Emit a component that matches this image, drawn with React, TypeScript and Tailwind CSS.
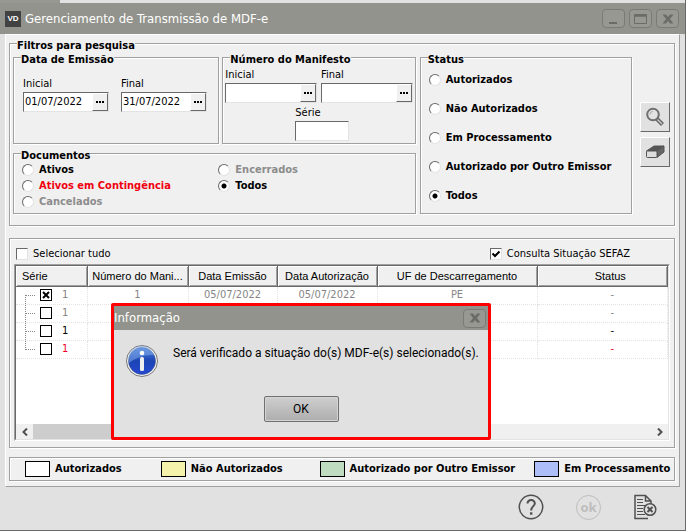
import type { ReactNode } from 'react';

const groove = 'border border-[#a0a0a0] shadow-[1px_1px_0_#fff,inset_1px_1px_0_#fff]';
const sunken = 'border border-t-[#696969] border-l-[#696969] border-r-[#e3e3e3] border-b-[#e3e3e3] bg-white';
const raised = 'border border-t-white border-l-white border-r-[#696969] border-b-[#696969]';

const statusOptions = ['Autorizados', 'Não Autorizados', 'Em Processamento', 'Autorizado por Outro Emissor', 'Todos'];

const documentOptions = [
  { label: 'Ativos', color: 'text-black' },
  { label: 'Encerrados', color: 'text-[#8c8c8c]' },
  { label: 'Ativos em Contingência', color: 'text-[#f0000f]' },
  { label: 'Todos', color: 'text-black' },
  { label: 'Cancelados', color: 'text-[#8c8c8c]' },
];

const rows = [
  { serie: '1', numero: '1', emissao: '05/07/2022', autorizacao: '05/07/2022', uf: 'PE', status: '-', color: 'text-[#868686]', checked: true },
  { serie: '1', numero: '', emissao: '', autorizacao: '', uf: '', status: '-', color: 'text-[#868686]', checked: false },
  { serie: '1', numero: '', emissao: '', autorizacao: '', uf: '', status: '-', color: 'text-black', checked: false },
  { serie: '1', numero: '', emissao: '', autorizacao: '', uf: '', status: '-', color: 'text-[#f0002a]', checked: false },
];

const columns = [
  { title: 'Série', width: 'w-[71px]' },
  { title: 'Número do Mani...', width: 'w-[101px]' },
  { title: 'Data Emissão', width: 'w-[89px]' },
  { title: 'Data Autorização', width: 'w-[100px]' },
  { title: 'UF de Descarregamento', width: 'w-[160px]' },
  { title: 'Status', width: 'w-auto' },
];

const Group = ({ title, className = '', children }: { title: string; className?: string; children: ReactNode }) => (
  <fieldset className={`relative min-w-0 ${groove} ${className}`}>
    <legend className="absolute -top-1.5 left-[7px] bg-[#f0f0f0] text-[11px] leading-4 font-bold whitespace-nowrap">{title}</legend>
    {children}
  </fieldset>
);

const Radio = ({ name, label, color = 'text-black', checked }: { name: string; label: string; color?: string; checked: boolean }) => (
  <label className={`flex items-center gap-[5px] text-[11px] leading-4 font-bold whitespace-nowrap ${color}`}>
    <input
      type="radio"
      name={name}
      defaultChecked={checked}
      className="size-3 shrink-0 appearance-none rounded-full border border-t-[#696969] border-l-[#696969] border-r-[#e3e3e3] border-b-[#e3e3e3] bg-white checked:bg-[radial-gradient(circle,#000_2px,#fff_3px)]"
    />
    {label}
  </label>
);

const CheckOption = ({ label, checked }: { label: string; checked: boolean }) => (
  <label className="flex items-center gap-[5px] text-[11px] leading-4 whitespace-nowrap">
    <span className="relative size-3">
      <input type="checkbox" defaultChecked={checked} className={`peer block size-3 appearance-none ${sunken}`} />
      <svg viewBox="0 0 12 12" className="pointer-events-none absolute inset-0 hidden size-3 peer-checked:block">
        <path d="M2.5 5.5 L5 8 L9.5 3.5" fill="none" stroke="#000" strokeWidth="2" />
      </svg>
    </span>
    {label}
  </label>
);

const PickerInput = ({ label, value = '' }: { label: string; value?: string }) => (
  <div className="min-w-0">
    <label className="block text-[11px] leading-4">
      {label}
      <span className={`flex h-5 ${sunken}`}>
        <input type="text" defaultValue={value} className="w-full min-w-0 pl-px outline-none" />
        <button type="button" aria-label={`Escolher ${label}`} className={`flex w-4 shrink-0 items-center justify-center bg-[#f0f0f0] ${raised}`}>
          <svg viewBox="0 0 8 2" className="h-0.5 w-2" fill="#000">
            <rect x="0" width="2" height="2" />
            <rect x="3" width="2" height="2" />
            <rect x="6" width="2" height="2" />
          </svg>
        </button>
      </span>
    </label>
  </div>
);

const CaptionButton = ({ label, children }: { label: string; children: ReactNode }) => (
  <button type="button" aria-label={label} className="flex h-[19px] w-[23px] items-center justify-center rounded border border-[#7a7b75] bg-[#979892]">
    <svg viewBox="0 0 14 12" className="h-3 w-3.5" fill="none" stroke="#6b6c67">
      {children}
    </svg>
  </button>
);

const closeMark = <path d="M1.500 1.500h3.500l2 2.500 2-2.500h3.500L8.900 6 12.500 10.500H9L7 8 5 10.500H1.500l3.600-4.500z" fill="#6b6c67" stroke="none" />;

const Filters = () => (
  <Group title="Filtros para pesquisa" className="flex gap-2 pt-[13px] pr-1 pb-[11px] pl-[3px]">
    <div className="grid min-w-0 flex-1 grid-cols-[404fr_213fr] gap-1">
      <div className="flex flex-col gap-[9px]">
        <div className="grid grid-cols-[207fr_194fr] gap-[3px]">
          <Group title="Data de Emissão" className="h-[87px] px-[9px] pt-[18px]">
            <div className="grid grid-cols-[86px_86px] gap-3">
              <PickerInput label="Inicial" value="01/07/2022" />
              <PickerInput label="Final" value="31/07/2022" />
            </div>
          </Group>
          <Group title="Número do Manifesto" className="h-[87px] px-[2px] pt-[9px]">
            <div className="grid grid-cols-2 gap-1">
              <PickerInput label="Inicial" />
              <PickerInput label="Final" />
            </div>
            <label className="mt-0.5 ml-[70px] block w-[54px] text-[11px] leading-4">
              Série
              <input type="text" className={`block h-5 w-full ${sunken}`} />
            </label>
          </Group>
        </div>
        <Group title="Documentos" className="grid h-[61px] grid-cols-2 content-start pt-2 pl-2">
          {documentOptions.map((option) => (
            <Radio key={option.label} name="documentos" label={option.label} color={option.color} checked={option.label === 'Todos'} />
          ))}
        </Group>
      </div>
      <Group title="Status" className="flex flex-col gap-[13px] pt-3.5 pl-2">
        {statusOptions.map((option) => (
          <Radio key={option} name="status" label={option} checked={option === 'Todos'} />
        ))}
      </Group>
    </div>
    <div className="flex flex-col gap-[5px] pt-[45px]">
      <button type="button" aria-label="Pesquisar" className={`flex size-[30px] items-center justify-center bg-[#e1e1e1] ${raised}`}>
        <svg viewBox="0 0 20 20" className="size-5" fill="none">
          <path d="M11.500 11.500 L17.500 17.500" stroke="#606060" strokeWidth="4" />
          <path d="M12.500 12.500 L17 17" stroke="#ccc" strokeWidth="1.500" />
          <circle cx="8" cy="7.500" r="5.800" fill="#e3e3e3" stroke="#707070" strokeWidth="2" />
          <path d="M5 7.500a3 3 0 0 1 3-3" stroke="#aaa" />
        </svg>
      </button>
      <button type="button" aria-label="Limpar" className={`flex size-[30px] items-center justify-center bg-[#e1e1e1] ${raised}`}>
        <svg viewBox="0 0 20 20" className="size-5" stroke="#555" strokeLinejoin="round">
          <path d="M1.500 9 L9 4 H19 L12 9z" fill="#555" />
          <path d="M12 9 L19 4 V10 L12 15.500z" fill="#666" />
          <rect x="1.500" y="9" width="10.500" height="6.500" rx="1" fill="#ddd" />
        </svg>
      </button>
    </div>
  </Group>
);

const Results = () => (
  <section className={`px-1 pt-[7px] pb-1.5 ${groove}`}>
    <div className="flex justify-between pr-10 pl-0.5">
      <CheckOption label="Selecionar tudo" checked={false} />
      <CheckOption label="Consulta Situação SEFAZ" checked />
    </div>
    <div className="mt-0.5 border border-t-[#a0a0a0] border-l-[#a0a0a0] border-r-white border-b-white">
      <div className={sunken}>
        <div className="min-h-[158px]">
          <table className="w-full table-fixed border-collapse text-center text-[11px] leading-4">
            <thead>
              <tr className="h-5">
                {columns.map((column) => (
                  <th
                    key={column.title}
                    className={`border-r border-b border-[#696969] bg-[#f0f0f0] p-0 font-['Liberation_Sans',sans-serif] font-normal whitespace-nowrap shadow-[inset_1px_1px_0_#fff,inset_-1px_-1px_0_#a0a0a0] first:pl-1.5 first:text-left last:pl-4 ${column.width}`}
                  >
                    {column.title}
                  </th>
                ))}
              </tr>
            </thead>
            <tbody>
              {rows.map((row, index) => (
                <tr key={index} className={`h-[18px] *:border-r *:border-b *:border-dotted *:border-[#e3e3e3] *:p-0 ${row.color}`}>
                  <td>
                    <div className="flex h-[17px] items-center pl-[9px]">
                      <span className={`h-[9px] w-2.5 self-start border-b border-dotted border-[#888] ${index === 0 ? '' : 'border-l'}`} />
                      <span className={`-ml-2.5 h-[9px] w-2.5 self-end border-dotted border-[#888] ${index < rows.length - 1 ? 'border-l' : ''}`} />
                      <span className="relative ml-[5px] size-3">
                        <input
                          type="checkbox"
                          aria-label={`Selecionar linha ${index + 1}`}
                          defaultChecked={row.checked}
                          className="peer block size-3 appearance-none border border-black bg-white"
                        />
                        <svg viewBox="0 0 12 12" className="pointer-events-none absolute inset-0 hidden size-3 peer-checked:block">
                          <path d="M3 3 L9 9 M9 3 L3 9" stroke="#000" strokeWidth="2" />
                        </svg>
                      </span>
                      <span className="ml-2.5">{row.serie}</span>
                    </div>
                  </td>
                  <td>{row.numero}</td>
                  <td>{row.emissao}</td>
                  <td>{row.autorizacao}</td>
                  <td>{row.uf}</td>
                  <td>
                    <div className="pl-5">{row.status}</div>
                  </td>
                </tr>
              ))}
            </tbody>
          </table>
        </div>
        <div className="flex h-[15px] justify-between bg-[#f0f0f0]">
          <button type="button" aria-label="Rolar para a esquerda" className="flex w-[17px] items-center justify-center">
            <svg viewBox="0 0 6 8" className="h-2 w-1.5" fill="none" stroke="#505050" strokeWidth="2">
              <path d="M5 0.500 L1.500 4 L5 7.500" />
            </svg>
          </button>
          <div className="mr-auto w-[65%] bg-[#cdcdcd]" />
          <button type="button" aria-label="Rolar para a direita" className="flex w-[17px] items-center justify-center">
            <svg viewBox="0 0 6 8" className="h-2 w-1.5" fill="none" stroke="#505050" strokeWidth="2">
              <path d="M1 0.500 L4.500 4 L1 7.500" />
            </svg>
          </button>
        </div>
      </div>
    </div>
  </section>
);

const LegendItem = ({ label, swatch }: { label: string; swatch: string }) => (
  <li className="flex items-center gap-[5px] whitespace-nowrap">
    <span className={`h-4 w-[25px] shrink-0 border border-black ${swatch}`} />
    {label}
  </li>
);

const Dialog = () => (
  <div role="dialog" aria-labelledby="dialog-title" className="absolute top-[303px] left-[111px] w-[380px] rounded-xs border-3 border-[#fe0000] bg-[#e1e1e1] pb-[15px]">
    <div className="flex h-6 items-center justify-between bg-[#92938c] pr-0.5">
      <h2 id="dialog-title" className="text-[13px] leading-4 text-white">Informação</h2>
      <CaptionButton label="Fechar">{closeMark}</CaptionButton>
    </div>
    <div className="flex gap-[15px] px-3 pt-[15px]">
      <svg viewBox="0 0 32 32" className="size-8 shrink-0">
        <defs>
          <linearGradient id="info" x1="0" y1="0" x2="0" y2="1">
            <stop offset="0" stopColor="#4f86dc" />
            <stop offset="0.500" stopColor="#1b44b4" />
            <stop offset="1" stopColor="#2548d0" />
          </linearGradient>
        </defs>
        <circle cx="16" cy="16" r="15.500" fill="#f4f4f4" stroke="#777" />
        <circle cx="16" cy="16" r="13.500" fill="url(#info)" stroke="#3d4c7c" strokeWidth="0.500" />
        <path d="M3 18A13 13 0 0 1 28 10Q15 9 3 18z" fill="#86aeea" opacity="0.500" />
        <circle cx="16" cy="8" r="2.300" fill="#fff" />
        <rect x="14" y="12" width="4" height="14" rx="1.500" fill="#eee" />
      </svg>
      <p className="font-['Roboto',sans-serif] text-[12px] leading-4 whitespace-nowrap">Será verificado a situação do(s) MDF-e(s) selecionado(s).</p>
    </div>
    <button type="button" className="mx-auto mt-[19px] block h-[26px] w-[75px] rounded-xs border border-[#707070] bg-linear-to-b from-[#cfcfcf] to-[#adadad] font-['Roboto',sans-serif] text-[12px] leading-4 shadow-[inset_0_0_0_1px_#d4d4d4]">
      OK
    </button>
  </div>
);

export default function App() {
  return (
    <div className="relative flex min-h-screen flex-col overflow-hidden border-r border-b border-[#696969] bg-[#e1e1e1] font-['DejaVu_Sans_Condensed','DejaVu_Sans',sans-serif] text-black">
      <div className="flex h-[3px]">
        <div className="w-[60px] bg-[#979892]" />
      </div>
      <header className="flex h-[31px] items-center bg-[#92938c] pr-1.5 pl-[5px]">
        <span className="flex size-4 items-center justify-center bg-[#424242] font-['Liberation_Sans',sans-serif] text-[8px] leading-none font-bold text-white">VD</span>
        <h1 className="flex-1 pl-1 text-[13px] leading-4 text-white">Gerenciamento de Transmissão de MDF-e</h1>
        <div className="flex gap-1">
          <CaptionButton label="Minimizar">
            <path d="M2 10h8" strokeWidth="2" />
          </CaptionButton>
          <CaptionButton label="Maximizar">
            <path d="M.5 1.500h12v9H.5zM1 3h12" strokeWidth="1" />
            <path d="M.5 2.500h12" strokeWidth="2" />
          </CaptionButton>
          <CaptionButton label="Fechar">{closeMark}</CaptionButton>
        </div>
      </header>
      <main className="mx-[5px] border border-t-white border-l-white border-r-[#a0a0a0] border-b-[#a0a0a0] bg-[#f0f0f0] pt-2 pr-1 pb-[5px] pl-[3px]">
        <div className="flex flex-col">
          <Filters />
          <div className="mt-3 mb-[9px]">
            <Results />
          </div>
          <ul className={`grid h-6 grid-cols-[136fr_159fr_215fr_140fr] items-center pl-[15px] text-[11px] leading-4 font-bold ${groove}`}>
            <LegendItem label="Autorizados" swatch="bg-white" />
            <LegendItem label="Não Autorizados" swatch="bg-[#f5f2ab]" />
            <LegendItem label="Autorizado por Outro Emissor" swatch="bg-[#bfdcc0]" />
            <LegendItem label="Em Processamento" swatch="bg-[#adbef9]" />
          </ul>
        </div>
      </main>
      <footer className="flex items-center justify-end gap-8 pt-[7px] pr-7">
        <button type="button" aria-label="Ajuda">
          <svg viewBox="0 0 26 26" className="size-[26px]" fill="none" stroke="#505050">
            <circle cx="13" cy="13" r="11.700" strokeWidth="1.500" />
            <path d="M9.500 9.500C9.500 4.800 17 5 16.800 9.500C16.700 12.200 13.200 12.300 13.200 16.500" strokeWidth="2" />
            <path d="M12 19.500h2.400" strokeWidth="2.400" />
          </svg>
        </button>
        <button type="button" disabled className="flex size-[25px] items-center justify-center rounded-full border border-[#bdbdbd] font-['Open_Sans',sans-serif] text-[13px] leading-4 font-bold text-[#bdbdbd]">
          ok
        </button>
        <button type="button" aria-label="Fechar relatório">
          <svg viewBox="0 0 24 26" className="h-[26px] w-6" fill="none" stroke="#505050" strokeWidth="1.500">
            <path d="M18 10V7L12.500 1.500H2V24.500H15M12.500 1.500V7H18" />
            <path d="M4 5.500h6M4 8.500h6M4 11.500h10M4 14.500h6M4 17.500h6M4 20.500h8" strokeWidth="1" />
            <circle cx="17" cy="15.500" r="5.800" fill="#e1e1e1" />
            <path d="M14.500 13l5 5M19.500 13l-5 5" strokeWidth="2" />
          </svg>
        </button>
      </footer>
      <Dialog />
    </div>
  );
}
